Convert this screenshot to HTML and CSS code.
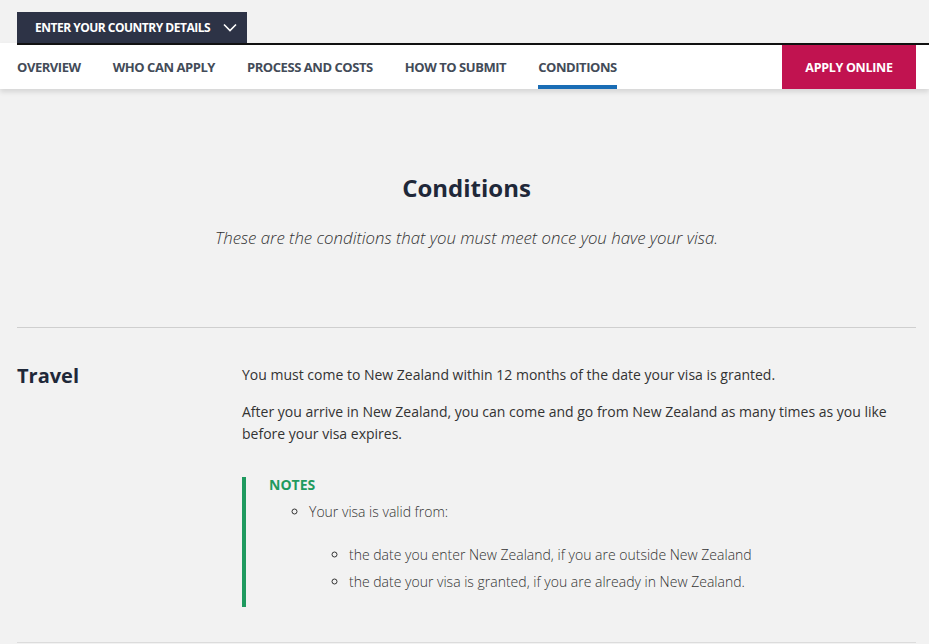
FILE: index.html
```html
<!DOCTYPE html>
<html lang="en">
<head>
<meta charset="utf-8">
<title>Conditions</title>
<link rel="stylesheet" href="styles.css">
</head>
<body>
<header class="site-header">
  <div class="country-row">
    <button class="country-btn">ENTER YOUR COUNTRY DETAILS
      <svg class="chev" width="14" height="9" viewBox="0 0 14 9"><path d="M1 1.5 L7 7.5 L13 1.5" fill="none" stroke="#fff" stroke-width="1.6"/></svg>
    </button>
  </div>
  <nav class="nav">
    <div class="nav-inner">
      <ul class="nav-list">
        <li class="nav-item">OVERVIEW</li>
        <li class="nav-item">WHO CAN APPLY</li>
        <li class="nav-item">PROCESS AND COSTS</li>
        <li class="nav-item">HOW TO SUBMIT</li>
        <li class="nav-item active">CONDITIONS</li>
      </ul>
      <a class="apply-btn">APPLY ONLINE</a>
    </div>
  </nav>
</header>
<main class="main">
  <section class="intro">
    <h1 class="title">Conditions</h1>
    <p class="lead">These are the conditions that you must meet once you have your visa.</p>
  </section>
  <section class="row">
    <h2 class="row-title">Travel</h2>
    <div class="row-body">
      <p>You must come to New Zealand within 12 months of the date your visa is granted.</p>
      <p>After you arrive in New Zealand, you can come and go from New Zealand as many times as you like before your visa expires.</p>
      <div class="notes">
        <div class="notes-title">NOTES</div>
        <ul class="notes-list">
          <li>Your visa is valid from:
            <ul class="sub-list">
              <li>the date you enter New Zealand, if you are outside New Zealand</li>
              <li>the date your visa is granted, if you are already in New Zealand.</li>
            </ul>
          </li>
        </ul>
      </div>
    </div>
  </section>
</main>
</body>
</html>
```

FILE: styles.css
```css
* { box-sizing: border-box; }
html, body { margin: 0; padding: 0; }
body {
  background: #f2f2f2;
  font-family: "Open Sans", "Noto Sans", sans-serif;
  color: #333;
  width: 929px;
  height: 644px;
  overflow: hidden;
}
.country-row { padding: 12px 0 0 17px; height: 43px; }
.country-btn {
  display: flex; align-items: center; gap: 10px;
  height: 31px; width: 230px;
  padding: 0 0 0 18px;
  background: #2d3346; color: #fff; border: 0;
  font-family: "Open Sans", sans-serif; font-weight: 700;
  font-size: 12px; letter-spacing: -0.5px;
}
.chev { margin-left: 3px; }
.nav { background: #fff; box-shadow: 0 3px 5px rgba(0,0,0,0.12); position: relative; }
.nav-inner {
  margin-left: 17px; padding-right: 13px;
  border-top: 2px solid #111;
  display: flex; justify-content: space-between; height: 46px;
}
.nav-list { display: flex; gap: 32px; list-style: none; margin: 0; padding: 0; }
.nav-item {
  height: 44px; display: flex; align-items: center; padding-top: 3px;
  font-size: 13px; font-weight: 700; color: #434b58; letter-spacing: -0.45px;
  border-bottom: 4px solid transparent;
}
.nav-item.active { border-bottom-color: #1a6db5; }
.apply-btn {
  width: 134px; height: 44px; background: #c11350; color: #fff;
  display: flex; align-items: center; justify-content: center;
  font-size: 12.5px; font-weight: 700; letter-spacing: -0.3px;
}
.main { padding: 0 13px 0 17px; }
.intro { text-align: center; padding-top: 83px; height: 239px; border-bottom: 1px solid #cfcfcf; }
.title { margin: 0; font-size: 24px; font-weight: 700; color: #1f2839; line-height: 32px; }
.lead { margin: 22px 0 0; font-style: italic; font-weight: 300; font-size: 16.8px; color: #333; }
.row { display: flex; padding-top: 34px; height: 315px; border-bottom: 1px solid #dcdcdc; }
.row-title { width: 225px; margin: 0; font-size: 20px; font-weight: 700; color: #1f2839; line-height: 28px; }
.row-body { flex: 1; font-size: 14px; line-height: 22px; color: #333; }
.row-body p { margin: 2px 0 15px; }
.notes { border-left: 4px solid #1f9a5f; margin-top: 32px; padding: 0 0 10px 23px; height: 130px; }
.notes-title { color: #1f9a5f; font-weight: 700; font-size: 14px; line-height: 16px; padding-top: 0; }
.notes-list { list-style: circle; margin: 8px 0 0; padding-left: 40px; font-weight: 300; font-size: 14px; }
.sub-list { list-style: circle; margin: 21px 0 0; padding-left: 40px; }
.sub-list li { margin-bottom: 5px; }
```
